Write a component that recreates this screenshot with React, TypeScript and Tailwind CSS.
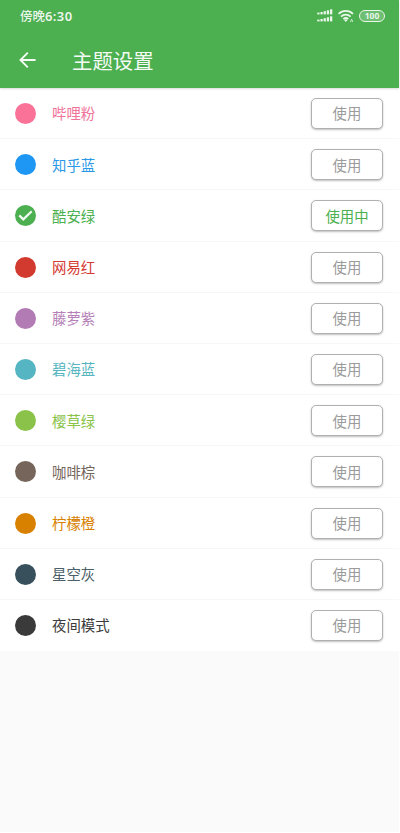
import clsx from 'clsx';

interface Theme {
  name: string;
  text: string;
  dot: string;
  active?: boolean;
}

const themes: Theme[] = [
  { name: '哔哩粉', text: 'text-[#f0749a]', dot: 'bg-[#fb7299]' },
  { name: '知乎蓝', text: 'text-[#2b98e6]', dot: 'bg-[#1e96f3]' },
  { name: '酷安绿', text: 'text-[#4caf50]', dot: 'bg-[#4caf50]', active: true },
  { name: '网易红', text: 'text-[#d33a31]', dot: 'bg-[#d33a2f]' },
  { name: '藤萝紫', text: 'text-[#b57fb8]', dot: 'bg-[#b37bb3]' },
  { name: '碧海蓝', text: 'text-[#56b5c1]', dot: 'bg-[#56b5c2]' },
  { name: '樱草绿', text: 'text-[#8bc34a]', dot: 'bg-[#8bc34a]' },
  { name: '咖啡棕', text: 'text-[#75655a]', dot: 'bg-[#75655a]' },
  { name: '柠檬橙', text: 'text-[#d88100]', dot: 'bg-[#d88100]' },
  { name: '星空灰', text: 'text-[#4a5f69]', dot: 'bg-[#37505c]' },
  { name: '夜间模式', text: 'text-[#3b3b3b]', dot: 'bg-[#3a3a3a]' },
];

const SignalIcon = () => (
  <svg className="w-4 h-3.5" viewBox="0 0 16 14" fill="currentColor">
    {[0, 7].map((y) => (
      <g key={y} transform={`translate(0 ${y})`}>
        <rect x="0.2" y="3.6" width="2.4" height="1.8" />
        <rect x="3.4" y="3" width="2.3" height="2.4" />
        <rect x="6.6" y="2.2" width="2.3" height="3.2" />
        <rect x="9.8" y="1.3" width="2.3" height="4.1" />
        <rect x="13" y="0.3" width="2.3" height="5.1" />
      </g>
    ))}
  </svg>
);

const WifiIcon = () => (
  <svg className="ml-[5px] w-4 h-3.5" viewBox="0 0 16 14" fill="none" stroke="currentColor" strokeWidth="1.8">
    <path d="M0.6 4.9a10.2 10.2 0 0 1 14.4 0" />
    <path d="M3 7.6a6.9 6.9 0 0 1 9.6 0" />
    <path d="M5.3 10.1a3.7 3.7 0 0 1 5 0" />
    <path d="M7.8 13L6 11.1a2.6 2.6 0 0 1 3.6 0Z" fill="currentColor" stroke="none" />
    <path d="M12.3 12.9l1.7-3M14.5 12.9v-1.6" strokeWidth="1.1" opacity="0.75" />
  </svg>
);

const StatusBar = () => (
  <div className="h-8 pl-5 pr-[14px] flex items-center justify-between text-[#e9f6e9]">
    <span className="flex items-center text-[12.5px] leading-none font-medium">
      傍晚<span className="font-['Noto_Sans'] text-[13px] tracking-[0.4px] font-semibold">6:30</span>
    </span>
    <div className="flex items-center">
      <SignalIcon />
      <WifiIcon />
      <span className="ml-[5px] w-[26px] h-3 flex items-center justify-center rounded-full border border-current bg-white/20 font-['Noto_Sans'] text-[8.5px] leading-none font-bold">
        100
      </span>
    </div>
  </div>
);

const Toolbar = () => (
  <div className="h-14 pl-[19px] flex items-center text-[#f4fbf4]">
    <svg className="w-[17px] h-[17px]" viewBox="0 0 17 17" fill="none" stroke="currentColor" strokeWidth="1.9">
      <path d="M16.6 8H1.8M8.8 0.7L1.5 8l7.3 7.3" />
    </svg>
    <h1 className="ml-9 text-[20.4px] leading-none">主题设置</h1>
  </div>
);

const ThemeRow = ({ theme }: { theme: Theme }) => (
  <li className="h-[51.2px] pt-px pl-[15px] pr-4 flex items-center border-b border-[#f7f7f7] bg-white last:border-white">
    <span className={clsx('w-[21px] h-[21px] rounded-full flex items-center justify-center', theme.dot)}>
      {theme.active && (
        <svg className="w-[15px] h-[15px]" viewBox="0 0 15 15" fill="none" stroke="#f2faf2" strokeWidth="2.2">
          <path d="M1.3 7.4l4 4L13.7 3.2" />
        </svg>
      )}
    </span>
    <span className={clsx('ml-4 text-[14.4px] leading-none', theme.text)}>{theme.name}</span>
    <button
      className={clsx(
        'ml-auto w-[72px] h-[31px] rounded-[5px] border-[1.5px] border-[#b0b0b0] bg-white text-[14.4px] leading-none shadow-[0_1px_2px_rgba(0,0,0,0.25)]',
        theme.active ? 'text-[#4caf50]' : 'text-[#9b9b9b]'
      )}
    >
      {theme.active ? '使用中' : '使用'}
    </button>
  </li>
);

export default function App() {
  return (
    <div className="h-[833px] pr-px pb-px bg-white overflow-hidden font-['Noto_Sans_CJK_SC',sans-serif]">
      <div className="h-full bg-[#fafafa]">
        <header className="relative h-[88px] bg-[#4caf50] shadow-[0_1px_2px_rgba(0,0,0,0.15)]">
          <StatusBar />
          <Toolbar />
        </header>
        <ul>
          {themes.map((theme) => (
            <ThemeRow key={theme.name} theme={theme} />
          ))}
        </ul>
      </div>
    </div>
  );
}
